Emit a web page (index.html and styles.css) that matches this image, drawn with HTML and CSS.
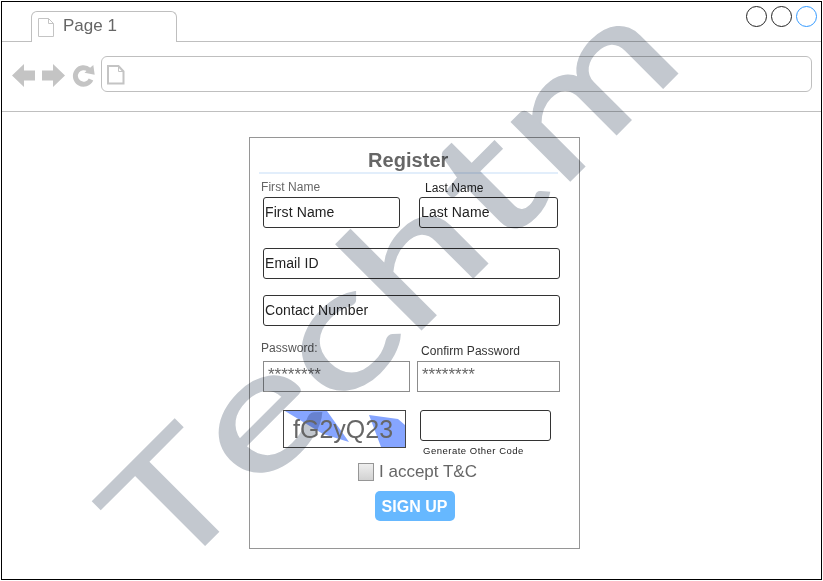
FILE: index.html
```html
<!DOCTYPE html>
<html lang="en">
<head>
<meta charset="utf-8">
<title>Register</title>
<link rel="stylesheet" href="styles.css">
</head>
<body>
<div class="window">
  <header class="tabs">
    <div class="tab">
      <svg class="tab-icon" width="17" height="20" viewBox="0 0 17 20"><path d="M.5 .5H10.500L15.500 5.500V18.500H.5ZM10.500 .5V5.500H15.500" fill="none" stroke="#c4c4c4"/></svg>
      <span>Page 1</span>
    </div>
    <div class="strip"></div>
    <div class="controls"><i></i><i></i><i class="blue"></i></div>
  </header>
  <nav class="toolbar">
    <svg class="nav-icons" width="84" height="26" viewBox="0 0 84 26">
      <g fill="#c4c4c4"><path d="M0 12.500L12 1V7.500H23V17.500H12V24Z"/><path d="M53 12.500L41 1V7.500H30V17.500H41V24Z"/></g>
      <path d="M79 16.500A8.200 8.200 0 1 1 77 6.800" fill="none" stroke="#c4c4c4" stroke-width="5"/>
      <path d="M81.300 2L82.700 11.700L72.500 9.800Z" fill="#c4c4c4"/>
    </svg>
    <div class="address">
      <svg width="18" height="20" viewBox="0 0 18 20"><path d="M1 1H11.500L16.500 6.500V18.500H1Z" fill="none" stroke="#c4c4c4" stroke-width="2"/><path d="M11.500 1V6.500H16.500" fill="none" stroke="#c4c4c4"/></svg>
    </div>
  </nav>
  <main>
    <form class="card">
      <h1>Register</h1>
      <div class="row names">
        <label class="grey"><span>First Name</span><b class="box">First Name</b></label>
        <label class="last"><span>Last Name</span><b class="box">Last Name</b></label>
      </div>
      <div class="box wide email">Email ID</div>
      <div class="box wide contact">Contact Number</div>
      <div class="row passwords">
        <label class="pass"><span>Password:</span><b class="secret">********</b></label>
        <label class="confirm"><span>Confirm Password</span><b class="secret">********</b></label>
      </div>
      <div class="row verify">
        <div class="captcha">
          <svg width="121" height="36" viewBox="0 0 121 36"><path d="M1 0H43L65 31L39 23ZM85 4L114 8L121 14V36H97Z" fill="#86a5ff"/></svg>
          <span>fG2yQ23</span>
        </div>
        <div class="code"><div class="box"></div><a>Generate Other Code</a></div>
      </div>
      <div class="terms"><i></i><span>I accept T&amp;C</span></div>
      <div class="signup">SIGN UP</div>
    </form>
  </main>
</div>
<svg class="watermark" width="823" height="581" viewBox="0 0 823 581">
  <text transform="rotate(-45) scale(1.34 1)" x="-218.500 -127.300 -39.800 37.300 131 194.200" y="531">T<tspan class="lower">echtm</tspan></text>
</svg>
</body>
</html>
```
FILE: styles.css
```css
* { box-sizing: border-box; }
body { margin: 0; width: 823px; height: 581px; overflow: hidden; background: #fff; position: relative; font-family: "Liberation Sans", Arial, sans-serif; color: #222; isolation: isolate; }
svg { display: block; }
.window { width: 821px; height: 579px; margin: 1px; border: 1px solid #000; display: flex; flex-direction: column; }
.tabs { height: 40px; display: flex; align-items: flex-end; position: relative; padding-left: 29px; }
.tabs::before { content: ""; position: absolute; left: 0; bottom: 0; width: 30px; border-bottom: 1px solid #bfbfbf; }
.tab { width: 146px; height: 31px; border: 1px solid #bfbfbf; border-bottom: 0; border-radius: 6px 6px 0 0; display: flex; padding: 6px 0 0 6px; font-size: 17px; line-height: 17px; color: #666; gap: 8px; }
.tab span { margin-top: -1px; }
.strip { flex: 1; border-bottom: 1px solid #bfbfbf; }
.controls { position: absolute; right: 4px; top: 4px; display: flex; gap: 4px; }
.controls i { width: 21px; height: 21px; border: 1px solid #222; border-radius: 50%; }
.controls .blue { border-color: #3399ff; }
.toolbar { height: 70px; border-bottom: 1px solid #bfbfbf; display: flex; padding: 14px 9px 0 10px; gap: 5px; }
.nav-icons { margin-top: 7px; }
.address { flex: 1; height: 36px; border: 1px solid #bfbfbf; border-radius: 6px; padding: 8px 0 0 5px; }
.card { width: 331px; height: 412px; border: 1px solid #969696; margin: 25px 0 0 247px; display: flex; flex-direction: column; }
h1 { font-size: 20px; line-height: 22px; height: 25px; margin: 11px 21px 0 9px; border-bottom: 2px solid #e2eefb; color: #666; padding-left: 109px; letter-spacing: .05px; }
.row { display: flex; }
label { display: flex; flex-direction: column; font-size: 12px; line-height: 14px; }
label b { font-weight: normal; }
label span { height: 17px; white-space: nowrap; letter-spacing: .06px; }
.box { border: 1px solid #333; border-radius: 3px; height: 31px; font-size: 14px; line-height: 29px; padding-left: 1px; white-space: nowrap; letter-spacing: .1px; }
.names { padding: 6px 0 0 13px; gap: 19px; }
.grey { width: 137px; }
.grey span { color: #666; margin-left: -2px; }
.last { width: 139px; }
.last span { padding: 1px 0 0 6px; }
.wide { width: 297px; margin: 20px 0 0 13px; flex: none; }
.contact { margin-top: 16px; }
.passwords { padding: 15px 0 0 13px; gap: 7px; }
.pass { width: 147px; color: #555; }
.confirm { width: 143px; color: #333; }
.passwords span { height: 20px; margin-left: -2px; }
.passwords .confirm span { margin-left: 4px; padding-top: 3px; }
.secret { height: 31px; border: 1px solid #8c8c8c; color: #666; font-size: 17px; line-height: 26px; padding-left: 4px; }
.verify { padding: 18px 0 0 33px; gap: 14px; }
.captcha { width: 123px; height: 38px; border: 1px solid #444; display: grid; }
.captcha > * { grid-area: 1 / 1; }
.captcha span { z-index: 1; font-size: 25px; line-height: 37px; padding-left: 9px; color: #666; }
.code { width: 131px; }
.code a { display: block; font-size: 9.500px; line-height: 12px; margin: 4px 0 0 3px; letter-spacing: .5px; white-space: nowrap; }
.terms { display: flex; padding-left: 108px; gap: 5px; height: 20px; margin-top: 5px; font-size: 17px; line-height: 20px; color: #666; }
.terms i { width: 16px; height: 18px; margin-top: 1px; border: 1px solid #969696; background: linear-gradient(#eee, #d2d2d2); }
.signup { width: 80px; height: 30px; margin: 8.500px 0 0 124.500px; border-radius: 5px; background: #66b8ff; color: #fff; font-size: 16px; font-weight: bold; line-height: 32px; text-align: center; white-space: nowrap; }
.watermark { position: absolute; left: 0; top: 0; mix-blend-mode: multiply; pointer-events: none; overflow: visible; }
.watermark text { font-family: Lato, sans-serif; font-size: 156px; fill: #c3c8cf; }
.watermark .lower { font-size: 164px; stroke: #c3c8cf; stroke-width: 1.500px; }
```
